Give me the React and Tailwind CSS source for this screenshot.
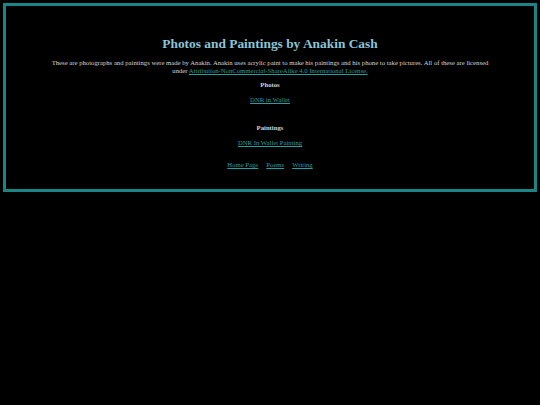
export default function App() {
    return (
        <div className="min-h-screen bg-black p-[3px] font-['Liberation_Serif',serif]">
            {/* Framed content box */}
            <div className="border-[3px] border-[#1b8585] text-center pt-[30px] pb-[20px]">
                <h1 className="text-[13.4px] leading-[16px] font-bold text-[#8cc4d8]">
                    Photos and Paintings by Anakin Cash
                </h1>
                <p className="mt-[7px] text-[6.7px] leading-[8px] text-[#d4d4d4] whitespace-nowrap">
                    These are photographs and paintings were made by Anakin. Anakin uses acrylic paint to make his paintings and his phone to take pictures. All of these are licensed
                    <br />
                    under{' '}
                    <a href="#" className="text-[#2a9c9c] underline">
                        Attribution-NonCommercial-ShareAlike 4.0 International License.
                    </a>
                </p>
                <h3 className="mt-[6px] text-[6.7px] leading-[8px] font-bold text-[#d4d4d4]">Photos</h3>
                <div className="mt-[7px] text-[6.7px] leading-[8px]">
                    <a href="#" className="text-[#2a9c9c] underline">DNR in Wallet</a>
                </div>
                <h3 className="mt-[20px] text-[6.7px] leading-[8px] font-bold text-[#d4d4d4]">Paintings</h3>
                <div className="mt-[7px] text-[6.7px] leading-[8px]">
                    <a href="#" className="text-[#2a9c9c] underline">DNR In Wallet Painting</a>
                </div>
                <div className="mt-[14px] text-[6.7px] leading-[8px] flex justify-center gap-[8px]">
                    <a href="#" className="text-[#2a9c9c] underline">Home Page</a>
                    <a href="#" className="text-[#2a9c9c] underline">Poems</a>
                    <a href="#" className="text-[#2a9c9c] underline">Writing</a>
                </div>
            </div>
        </div>
    );
}
